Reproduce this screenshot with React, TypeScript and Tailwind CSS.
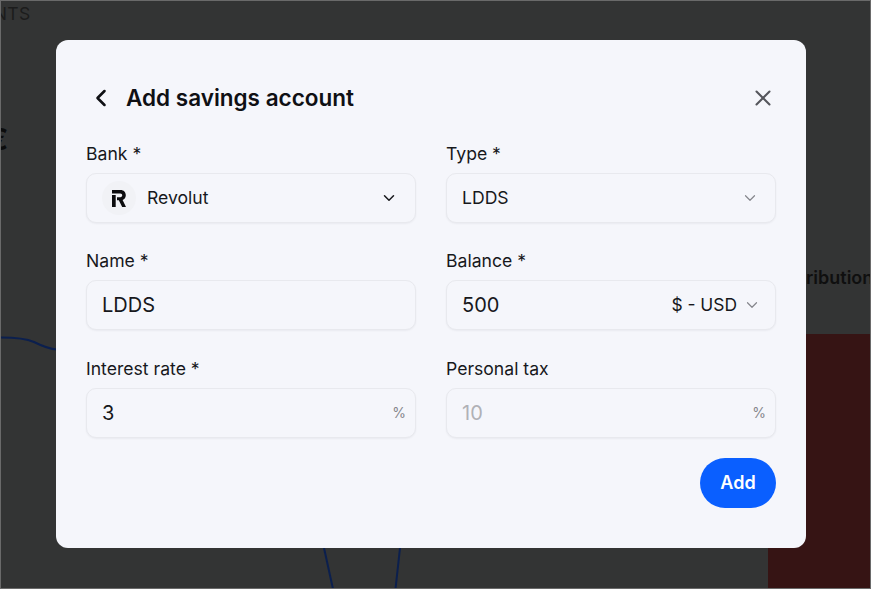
import { ChevronDown, ChevronLeft, X } from 'lucide-react';

const FONT = "font-['Inter',sans-serif]";

function Field({ label, children }: { label: string; children: React.ReactNode }) {
  return (
    <div className="flex flex-col">
      <label className="mb-[6px] mt-[1px] h-[26px] text-[17.6px] leading-[26px] text-[#17181c]">{label}</label>
      {children}
    </div>
  );
}

function Box({ children }: { children: React.ReactNode }) {
  return (
    <div className="flex h-[50px] items-center rounded-[10px] border border-[#e8e9ee] bg-[#f5f6fb] pl-[15px] pr-[9px] shadow-[0_1px_2px_rgba(20,20,40,0.05)]">
      {children}
    </div>
  );
}

function Percent() {
  return <span className="ml-auto text-[14px] text-[#85868c]">%</span>;
}

export default function App() {
  return (
    <div className={`${FONT} relative h-[589px] w-[871px] overflow-hidden border border-[#6a6a6a] bg-[#333434]`}>
      {/* page behind the overlay */}
      <div className="absolute left-[-68px] top-[1px] text-[17.6px] leading-[24px] tracking-[0.3px] text-[#1c1c1c]">PAYMENTS</div>
      <div className="absolute left-[-13px] top-[120px] text-[30px] font-semibold leading-[36px] text-[#0c0c0c]">€</div>
      <div className="absolute left-[805px] top-[265px] whitespace-nowrap text-[18px] font-semibold leading-[24px] text-[#0f0f0f]">ribution</div>
      <div className="absolute left-[767px] top-[333px] h-[260px] w-[110px] bg-[#361414]" />
      <svg className="absolute left-0 top-0" width="871" height="589" fill="none">
        <path d="M0 336.5 C12 336.5 24 337 33 341 C41 345 48 348 56 348.5" stroke="#0b1f4e" strokeWidth="2" />
        <path d="M323 547 L332 588" stroke="#0b1f4e" strokeWidth="2" />
        <path d="M399 547 L394.5 588" stroke="#0b1f4e" strokeWidth="2" />
      </svg>

      {/* modal */}
      <div className="absolute left-[55px] top-[39px] h-[508px] w-[750px] rounded-[12px] bg-[#f5f6fb] px-[30px] pt-[30px]">
        <div className="flex h-[56px] items-center">
          <ChevronLeft className="ml-[1px] h-[28px] w-[28px] text-[#0f1014]" strokeWidth={2.2} />
          <h2 className="ml-[11px] text-[22.5px] font-semibold leading-[28px] text-[#0f1014]">Add savings account</h2>
          <X className="ml-auto h-[26px] w-[26px] text-[#55565c]" strokeWidth={1.9} />
        </div>

        <div className="mt-[14px] grid grid-cols-2 gap-x-[30px] gap-y-[24.4px]">
          <Field label="Bank *">
            <Box>
              <span className="flex h-[34px] w-[34px] items-center justify-center rounded-full bg-[#f1f2f6]">
                <svg width="14" height="17" viewBox="0 0 14 17" fill="#0c0c0f">
                  <path d="M0 5H3.7V17H0Z" />
                  <path d="M0 0H8.5C11.8 0 13.8 2.2 13.8 5.3C13.8 7.5 12.5 9.2 10.6 10L14 17H10.2L6.8 10.2H5V7.2H8.3C9.6 7.2 10.2 6.4 10.2 5.3C10.2 4.1 9.5 3.4 8.3 3.4H0Z" />
                </svg>
              </span>
              <span className="ml-[11px] text-[17.6px] text-[#17181c]">Revolut</span>
              <ChevronDown className="ml-auto mr-[8px] h-[18px] w-[18px] text-[#17181c]" strokeWidth={2} />
            </Box>
          </Field>
          <Field label="Type *">
            <Box>
              <span className="text-[17.6px] text-[#17181c]">LDDS</span>
              <ChevronDown className="ml-auto mr-[7px] h-[18px] w-[18px] text-[#85868c]" strokeWidth={1.6} />
            </Box>
          </Field>
          <Field label="Name *">
            <Box>
              <span className="text-[20px] text-[#17181c]">LDDS</span>
            </Box>
          </Field>
          <Field label="Balance *">
            <Box>
              <span className="text-[20px] text-[#17181c]">500</span>
              <span className="ml-auto text-[17.4px] text-[#17181c]">$ - USD</span>
              <ChevronDown className="ml-[6px] mr-[5px] h-[18px] w-[18px] text-[#85868c]" strokeWidth={1.6} />
            </Box>
          </Field>
          <Field label="Interest rate *">
            <Box>
              <span className="text-[20px] text-[#17181c]">3</span>
              <Percent />
            </Box>
          </Field>
          <Field label="Personal tax">
            <Box>
              <span className="text-[20px] text-[#b0b1b6]">10</span>
              <Percent />
            </Box>
          </Field>
        </div>

        <div className="mt-[20px] flex justify-end">
          <button className="h-[50px] w-[76px] rounded-full bg-[#0a5fff] text-[18px] font-semibold text-white">Add</button>
        </div>
      </div>
    </div>
  );
}
